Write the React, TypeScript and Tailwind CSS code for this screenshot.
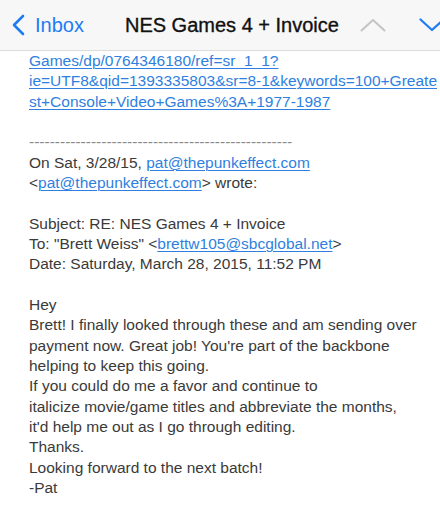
const font = { fontFamily: '"Liberation Sans", Arial, sans-serif' };

function Link({ children }: { children: React.ReactNode }) {
  return <span className="text-[#2f7fe0] underline decoration-1 underline-offset-2">{children}</span>;
}

export default function App() {
  return (
    <div className="h-[507px] w-[440px] overflow-hidden bg-white" style={font}>
      <header className="flex h-[51px] items-center whitespace-nowrap border-b border-[#dcdcdc] bg-[#f7f7f7]">
        <div className="flex shrink-0 items-center pl-[11px] text-[#1e7cf2]">
          <svg width="14" height="22" viewBox="0 0 14 22" fill="none">
            <path d="M12 2 L3 11 L12 20" stroke="currentColor" strokeWidth="2.6" strokeLinecap="round" strokeLinejoin="round" />
          </svg>
          <span className="ml-[10px] text-[20px] leading-none">Inbox</span>
        </div>
        <div className="ml-[41px] shrink-0 text-[20px] leading-none text-[#111] [-webkit-text-stroke:0.35px_#111]">
          NES Games 4 + Invoice
        </div>
        <svg className="ml-[21px] shrink-0" width="26" height="14" viewBox="0 0 26 14" fill="none">
          <path d="M1.5 12.5 L13 2 L24.5 12.5" stroke="#c4c4c4" strokeWidth="2" strokeLinecap="round" strokeLinejoin="round" />
        </svg>
        <svg className="ml-[33px] shrink-0" width="26" height="14" viewBox="0 0 26 14" fill="none">
          <path d="M1.5 1.5 L13 12 L24.5 1.5" stroke="#1e7cf2" strokeWidth="2.2" strokeLinecap="round" strokeLinejoin="round" />
        </svg>
      </header>

      <div className="whitespace-nowrap pl-[29px] text-[15.5px] leading-[20.33px] text-[#3a3a3a]">
        <div><Link>Games/dp/0764346180/ref=sr_1_1?</Link></div>
        <div><Link>ie=UTF8&amp;qid=1393335803&amp;sr=8-1&amp;keywords=100+Greate</Link></div>
        <div><Link>st+Console+Video+Games%3A+1977-1987</Link></div>
        <div className="h-[20.33px]" />
        <div className="text-[#8a8a8a]">---------------------------------------------------</div>
        <div>On Sat, 3/28/15, <Link>pat@thepunkeffect.com</Link></div>
        <div>&lt;<Link>pat@thepunkeffect.com</Link>&gt; wrote:</div>
        <div className="h-[20.33px]" />
        <div>Subject: RE: NES Games 4 + Invoice</div>
        <div>To: "Brett Weiss" &lt;<Link>brettw105@sbcglobal.net</Link>&gt;</div>
        <div>Date: Saturday, March 28, 2015, 11:52 PM</div>
        <div className="h-[20.33px]" />
        <div>Hey</div>
        <div>Brett! I finally looked through these and am sending over</div>
        <div>payment now. Great job! You're part of the backbone</div>
        <div>helping to keep this going.</div>
        <div>If you could do me a favor and continue to</div>
        <div>italicize movie/game titles and abbreviate the months,</div>
        <div>it'd help me out as I go through editing.</div>
        <div>Thanks.</div>
        <div>Looking forward to the next batch!</div>
        <div>-Pat</div>
      </div>
    </div>
  );
}
